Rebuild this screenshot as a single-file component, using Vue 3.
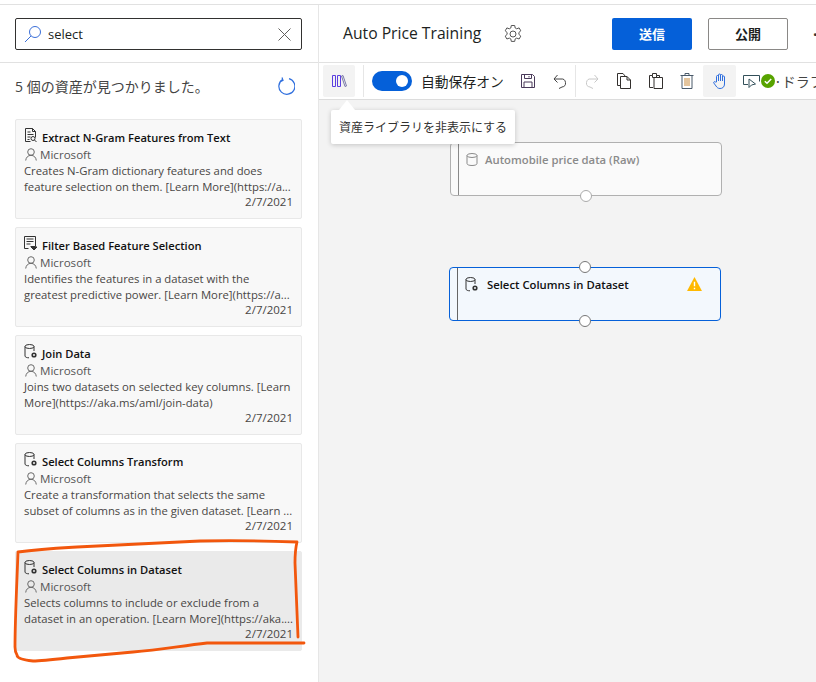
<template>
  <div class="page">
    <aside class="side">
      <div class="search-row">
        <div class="search">
          <svg class="s-ico" viewBox="0 0 18 18" width="18" height="18"><circle cx="11" cy="7" r="5.5"/><path d="M7 11 1 17"/></svg>
          <span class="s-text">select</span>
          <svg class="s-x" viewBox="0 0 13 13" width="13" height="13"><path d="M.5.5l12 12M12.5.5l-12 12"/></svg>
        </div>
      </div>
      <div class="found">
        <span>5 個の資産が見つかりました。</span>
        <svg viewBox="0 0 18 18" width="18" height="18" class="refresh"><path d="M5.500 2.600A8 8 0 1 0 12 1.600"/><path d="M5 .5 6 3.400 3 4.600" /></svg>
      </div>
      <div class="cards">
        <div v-for="c in cards" :key="c.title" class="card" :class="{ sel: c.sel }">
          <div class="c-title">
            <svg v-if="c.icon === 'doc'" class="c-ico" viewBox="0 0 14 15" width="14" height="15"><path d="M1.500.5h7l3 3v6M1.500.5v13h5M8.500.5v3h3M3.500 4h3M3.500 6.500h6M3.500 9h3M3.500 11.500h2"/><circle cx="9" cy="10.500" r="2"/><path d="M10.500 12l2 2"/></svg>
            <svg v-else-if="c.icon === 'list'" class="c-ico" viewBox="0 0 14 15" width="14" height="15"><path d="M.5.5h11v10h-5M.5.5v12h4M2.500 3h7M2.500 5.500h7M2.500 8h4"/><path d="M7 11h6l-3 3z" fill="#333"/></svg>
            <svg v-else class="c-ico" viewBox="0 0 14 15" width="14" height="15"><ellipse cx="5.500" cy="2.500" rx="4.500" ry="2"/><path d="M1 2.500v9.500c0 1.200 2 1.800 4 1.800M10 2.500v4.500"/><circle cx="10" cy="11" r="1.800" stroke-width="1.600"/></svg>
            <span>{{ c.title }}</span>
          </div>
          <div class="c-author">
            <svg viewBox="0 0 12 13" width="12" height="13"><circle cx="6" cy="4" r="3.300"/><path d="M.7 12.500c.3-3 2.300-5.200 5.300-5.200s5 2.200 5.300 5.200"/></svg>
            <span>Microsoft</span>
          </div>
          <div class="c-desc">{{ c.l1 }}<br />{{ c.l2 }}</div>
          <div class="c-date">2/7/2021</div>
        </div>
      </div>
    </aside>

    <main class="main">
      <header class="head">
        <span class="title">Auto Price Training</span>
        <svg class="gear" viewBox="0 0 20 20" width="20" height="20"><circle cx="10" cy="10" r="3"/><path d="M8.300 1.500h3.400l.5 2.500 1.500.8 2.400-.9 1.700 2.900-1.900 1.700v1.900l1.900 1.700-1.700 2.900-2.400-.9-1.500.8-.5 2.500H8.300l-.5-2.500-1.500-.8-2.400.9-1.700-2.900 1.900-1.700V8.500L2.200 6.800l1.700-2.900 2.400.9 1.500-.8z"/></svg>
        <button class="btn primary">送信</button>
        <button class="btn outline">公開</button>
        <span class="more">·</span>
      </header>

      <div class="toolbar">
        <div class="tb lib">
          <svg viewBox="0 0 15 12" width="15" height="12" class="i-lib"><path d="M.5.5h3v11h-3zM5.500.5h3v11h-3z"/><path d="M9.500 1 11 .5l3.500 10.500-1.500.5z" stroke="#7a7aa8"/></svg>
        </div>
        <i class="sep first"></i>
        <div class="toggle"><b></b></div>
        <span class="auto">自動保存オン</span>
        <svg class="i i-save" viewBox="0 0 14 14" width="14" height="14"><path d="M.5.500h11l2 2v11H.5zM3.500.500v4h7v-4M3 13.500V8h8v5.500M8 2v1.500"/></svg>
        <svg class="i i-undo" viewBox="0 0 13 15" width="13" height="15"><path d="M1 5h7a4 4 0 0 1 1 8l-3 1.500M4.500 1 1 5l3.500 3.500"/></svg>
        <i class="sep mid"></i>
        <svg class="i i-redo" viewBox="0 0 13 15" width="13" height="15"><path d="M12 5H5a4 4 0 0 0-1 8l3 1.500M8.500 1 12 5 8.500 8.500"/></svg>
        <svg class="i i-copy" viewBox="0 0 14 16" width="14" height="16"><path d="M4 12.500H.5V.5H6l2.500 3"/><path d="M3.500 3.500H10l3.500 3.500v8.500h-10zM10 3.500V7h3.500"/></svg>
        <svg class="i i-paste" viewBox="0 0 14 16" width="14" height="16"><path d="M4 14.500H.5v-12h3V.5h4v2h3v2M5 4.500h8.500v11H5zM3.500 2.500v2h4v-2"/></svg>
        <svg class="i i-trash" viewBox="0 0 14 16" width="14" height="16"><path d="M.5 2.500h13M5 2.500V.5h4v2M2 2.500v13h10v-13"/><path d="M5 5v8M7 5v8M9 5v8" stroke="#c98a3a"/></svg>
        <div class="tb hand">
          <svg viewBox="0 0 14 16" width="14" height="16"><path d="M3.500 9V3.500a1 1 0 0 1 2 0V8 2a1 1 0 0 1 2 0v6-5.500a1 1 0 0 1 2 0V8 4a1 1 0 0 1 2 0v7c0 3-2 4.500-4.500 4.500-2 0-3-1-4-2.500L.8 10c-.6-1 .7-1.800 1.500-1z"/></svg>
        </div>
        <svg class="i i-cur" viewBox="0 0 17 13" width="17" height="13"><path d="M5 9.500H.5V.5h16v6"/><path d="M6 4v8.500l2.500-2.500 4-1z"/></svg>
        <svg class="i-ok" viewBox="0 0 14 14" width="14" height="14"><circle cx="7" cy="7" r="7" fill="#57a300"/><path d="M3.800 7.200 6 9.300l4.200-4.300" fill="none" stroke="#fff" stroke-width="1.500"/></svg>
        <span class="draft">·ドラフト</span>
      </div>

      <div class="canvas">
        <div class="tip"><span>資産ライブラリを非表示にする</span></div>
        <div class="node raw">
          <svg viewBox="0 0 12 13" width="12" height="13"><ellipse cx="6" cy="2.500" rx="5" ry="2"/><path d="M1 2.500v8c0 1.200 2 2 5 2s5-.8 5-2v-8"/></svg>
          <span>Automobile price data (Raw)</span>
          <i class="port bottom"></i>
        </div>
        <div class="node act">
          <svg viewBox="0 0 14 15" width="14" height="15"><ellipse cx="5.500" cy="2.500" rx="4.500" ry="2"/><path d="M1 2.500v9.500c0 1.200 2 1.800 4 1.800M10 2.500v4.500"/><circle cx="10" cy="11" r="1.800" stroke-width="1.600"/></svg>
          <span>Select Columns in Dataset</span>
          <svg class="warn" viewBox="0 0 16 15" width="15" height="14"><path d="M8 0 16 15H0z"/><path d="M8 5v5M8 11.500v1.500" class="bang"/></svg>
          <i class="port top"></i>
          <i class="port bottom"></i>
        </div>
      </div>
    </main>

    <svg class="ink" viewBox="0 0 816 682" width="816" height="682">
      <path d="M18 552C40 549 60 548 77 547C120 545 160 543 200 541C240 540 270 541 297 542C295 550 295 556 295 563L298 637M304 643H207C180 646 160 650 133 652C110 654 90 656 67 658C50 660 40 661 33 661C22 660 17 658 17 655C15 652 15 650 15 647C15 620 17 580 18 552"/>
    </svg>
  </div>
</template>

<script setup>
const cards = [
  { title: 'Extract N-Gram Features from Text', icon: 'doc', l1: 'Creates N-Gram dictionary features and does', l2: 'feature selection on them. [Learn More](https://a...' },
  { title: 'Filter Based Feature Selection', icon: 'list', l1: 'Identifies the features in a dataset with the', l2: 'greatest predictive power. [Learn More](https://a...' },
  { title: 'Join Data', icon: 'db', l1: 'Joins two datasets on selected key columns. [Learn', l2: 'More](https://aka.ms/aml/join-data)' },
  { title: 'Select Columns Transform', icon: 'db', l1: 'Create a transformation that selects the same', l2: 'subset of columns as in the given dataset. [Learn ...' },
  { title: 'Select Columns in Dataset', icon: 'db', sel: true, l1: 'Selects columns to include or exclude from a', l2: 'dataset in an operation. [Learn More](https://aka....' }
]
</script>

<style>
html, body { margin: 0; background: #fff; }
</style>

<style scoped>
.page {
  position: relative;
  width: 816px;
  height: 682px;
  overflow: hidden;
  display: flex;
  padding-top: 4px;
  box-sizing: border-box;
  background: #fff;
  font-family: "Open Sans", "Noto Sans CJK JP", sans-serif;
  color: #201f1e;
}
.page::before {
  content: "";
  position: absolute;
  top: 4px;
  left: 0;
  right: 0;
  height: 1px;
  background: #e1e1e1;
}
.side {
  width: 319px;
  flex: none;
  border-right: 1px solid #e6e6e6;
  box-sizing: border-box;
  padding-top: 1px;
}
.search-row {
  height: 58px;
  padding: 13px 16px 0 15px;
  box-sizing: border-box;
  border-bottom: 1px solid #e1e1e1;
}
.search {
  height: 32px;
  box-sizing: border-box;
  border: 1px solid #323130;
  border-radius: 2px;
  display: flex;
  align-items: center;
  padding: 0 10px 0 8px;
}
.s-ico { fill: none; stroke: #3b6fd8; stroke-width: 1; }
.s-text { flex: 1; margin-left: 6px; font-size: 13px; color: #201f1e; }
.s-x { fill: none; stroke: #605e5c; stroke-width: 1; }
.found {
  display: flex;
  align-items: center;
  justify-content: space-between;
  height: 48px;
  padding: 0 23px 2px 15px;
  box-sizing: border-box;
  font-size: 14px;
  color: #444;
}
.refresh { fill: none; stroke: #2f6fde; stroke-width: 1.200; }
.cards {
  margin: 8px 16px 0 15px;
  display: flex;
  flex-direction: column;
  gap: 8px;
}
.card {
  height: 100px;
  box-sizing: border-box;
  background: #f8f8f8;
  border: 1px solid #e8e8e8;
  border-radius: 2px;
  padding: 9px 8px 0;
  font-size: 11.300px;
  line-height: 16px;
  color: #484644;
}
.card.sel { background: #eaeaea; border-color: #eaeaea; }
.c-title {
  display: flex;
  align-items: center;
  height: 17px;
  font-weight: 600;
  color: #111;
  font-size: 11.150px;
}
.c-ico {
  flex: none;
  margin-right: 4px;
  margin-top: -4px;
  fill: none;
  stroke: #333;
  stroke-width: 1;
}
.c-author {
  display: flex;
  align-items: center;
  gap: 3px;
  height: 17px;
  font-size: 11.600px;
  color: #555;
}
.c-author svg { margin-left: 1px; fill: none; stroke: #6a6a6a; stroke-width: 1; }
.c-desc { white-space: nowrap; }
.c-date { text-align: right; margin-top: -1px; font-size: 11.500px; }

.main { flex: 1; min-width: 0; display: flex; flex-direction: column; padding-top: 1px; }
.head {
  height: 58px;
  flex: none;
  box-sizing: border-box;
  border-bottom: 1px solid #e1e1e1;
  display: flex;
  align-items: center;
  padding: 1px 0 0 24px;
  white-space: nowrap;
}
.title { font-size: 15.700px; color: #201f1e; width: 160px; flex: none; font-weight: 500; margin-top: -3px; }
.gear { flex: none; fill: none; stroke: #555; stroke-width: 1; }
.btn {
  flex: none;
  width: 80px;
  height: 32px;
  font: 600 13px "Noto Sans CJK JP", sans-serif;
  border-radius: 2px;
  padding: 0 0 2px;
}
.primary { background: #0560d9; border: 0; color: #fff; margin-left: 89px; }
.outline { background: #fff; border: 1px solid #8a8886; color: #201f1e; margin-left: 16px; }
.more { margin-left: 25px; font-weight: 700; color: #333; }

.toolbar {
  height: 37px;
  flex: none;
  box-sizing: border-box;
  border-bottom: 1px solid #dcdcdc;
  display: flex;
  align-items: center;
  padding-left: 4px;
  overflow: hidden;
  white-space: nowrap;
}
.tb {
  width: 32px;
  height: 32px;
  flex: none;
  display: flex;
  align-items: center;
  justify-content: center;
  background: #f3f3f3;
  border-radius: 2px;
}
.i-lib { fill: none; stroke: #5b3fe0; stroke-width: 1; }
.sep { flex: none; width: 1px; height: 32px; background: #e6e6e6; }
.sep.first { margin-left: 8px; }
.toggle {
  flex: none;
  width: 40px;
  height: 20px;
  margin-left: 8px;
  border-radius: 10px;
  background: #0560d9;
  display: flex;
  align-items: center;
  justify-content: flex-end;
  padding-right: 4px;
  box-sizing: border-box;
}
.toggle b { width: 12px; height: 12px; border-radius: 50%; background: #fff; }
.auto { flex: none; margin-left: 9px; width: 83px; font-size: 13.800px; color: #201f1e; font-family: "Noto Sans CJK JP", sans-serif; }
.i { flex: none; fill: none; stroke: #33302e; stroke-width: 1; }
.i-save { margin-left: 17px; stroke: #4a3a5a; }
.i-undo { margin-left: 18px; stroke: #444; }
.sep.mid { margin-left: 9px; }
.i-redo { margin-left: 10px; stroke: #c8c8c8; }
.i-copy { margin-left: 18px; }
.i-paste { margin-left: 18px; }
.i-trash { margin-left: 17px; stroke: #4a5a6a; }
.hand { margin-left: 9px; width: 33px; }
.hand svg { fill: none; stroke: #2f6fde; stroke-width: 1; }
.i-cur { margin-left: 7px; stroke: #33505a; }
.i-ok { flex: none; margin-left: 1px; }
.draft { flex: none; font-size: 14px; color: #444; font-family: "Noto Sans CJK JP", sans-serif; margin-left: -1px; }

.canvas { flex: 1; position: relative; background: #f3f3f3; }
.tip {
  position: absolute;
  left: 12px;
  top: 10px;
  width: 184px;
  height: 34px;
  box-sizing: border-box;
  background: #fff;
  border-radius: 2px;
  box-shadow: 0 1px 5px rgba(0, 0, 0, .2);
  font: 12px/34px "Noto Sans CJK JP", sans-serif;
  color: #323130;
  padding-left: 8px;
  z-index: 2;
}
.tip::before {
  content: "";
  position: absolute;
  left: 8px;
  top: -10px;
  border-left: 8px solid transparent;
  border-right: 8px solid transparent;
  border-bottom: 10px solid #fff;
}
.tip span { position: relative; }
.node {
  position: absolute;
  width: 272px;
  height: 54px;
  box-sizing: border-box;
  border-radius: 4px;
  display: flex;
  align-items: flex-start;
  padding: 10px 0 0 15px;
  font-size: 11.300px;
  font-weight: 600;
}
.node::before {
  content: "";
  position: absolute;
  left: 7px;
  top: 0;
  bottom: 0;
  width: 1px;
  background: currentColor;
}
.node svg { flex: none; fill: none; stroke: currentColor; stroke-width: 1; }
.raw {
  left: 131px;
  top: 42px;
  border: 1px solid #b0b0b0;
  background: #fafafa;
  color: #8a8a8a;
}
.raw span { margin-left: 7px; line-height: 14px; }
.act {
  left: 130px;
  top: 167px;
  border: 1px solid #0560d9;
  background: #f3f8fd;
  color: #111;
}
.act::before { background: #666; }
.act svg { stroke: #333; margin-top: -1px; }
.act span { margin-left: 8px; line-height: 14px; }
.node .warn { position: absolute; right: 18px; top: 9px; fill: #ffb900; stroke: none; margin: 0; }
.node .warn .bang { stroke: #fff; stroke-width: 1.500; }
.port {
  position: absolute;
  left: 129px;
  width: 12px;
  height: 12px;
  box-sizing: border-box;
  border-radius: 50%;
  background: #fff;
  border: 1px solid #777;
}
.port.top { top: -7px; }
.port.bottom { bottom: -7px; }
.raw .port { border-color: #aaa; }
.ink {
  position: absolute;
  left: 0;
  top: 0;
  fill: none;
  stroke: #f2570d;
  stroke-width: 2.800;
  stroke-linecap: round;
  stroke-linejoin: round;
  pointer-events: none;
}
</style>
